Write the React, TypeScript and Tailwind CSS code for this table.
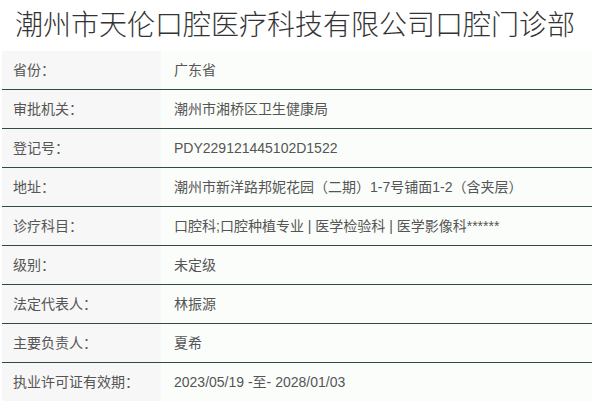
import React from "react";

const rows: [string, string][] = [
  ["省份：", "广东省"],
  ["审批机关：", "潮州市湘桥区卫生健康局"],
  ["登记号：", "PDY229121445102D1522"],
  ["地址：", "潮州市新洋路邦妮花园（二期）1-7号铺面1-2（含夹层）"],
  ["诊疗科目：", "口腔科;口腔种植专业 | 医学检验科 | 医学影像科******"],
  ["级别：", "未定级"],
  ["法定代表人：", "林振源"],
  ["主要负责人：", "夏希"],
  ["执业许可证有效期：", "2023/05/19 -至- 2028/01/03"],
];

export default function App() {
  return (
    <div
      className="w-[599px] h-[401px] overflow-hidden bg-white"
      style={{ fontFamily: '"Liberation Sans", "Noto Sans CJK SC", sans-serif' }}
    >
      <h1
        className="h-[51px] pl-[15px] pt-[3px] text-[28px] leading-[40px] font-light text-[#333] whitespace-nowrap"
        style={{ fontFamily: '"Noto Sans CJK SC", sans-serif' }}
      >
        潮州市天伦口腔医疗科技有限公司口腔门诊部
      </h1>
      <div className="ml-[2px] w-[590px]">
        {rows.map(([k, v], i) => (
          <div
            key={i}
            className="flex h-[39px] border-b border-[#2e4d3e] text-[14px] text-[#555]"
          >
            <div className="w-[159px] bg-[#f7f7f7] flex items-center pl-[11px]">{k}</div>
            <div className="flex-1 bg-[#fbfdfb] flex items-center pl-[13px]">{v}</div>
          </div>
        ))}
      </div>
    </div>
  );
}
